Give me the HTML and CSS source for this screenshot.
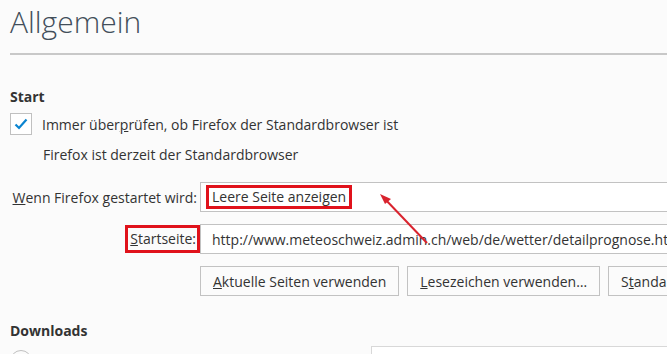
FILE: index.html
```html
<!DOCTYPE html>
<html lang="de">
<head>
  <meta charset="UTF-8">
  <title>Einstellungen - Allgemein</title>
  <link rel="stylesheet" href="styles.css">
</head>
<body>

  <div class="page">
    <h1 class="title">Allgemein</h1>

    <!-- Start -->
    <h2 class="group">Start</h2>
    <div class="check-row">
      <span class="checkbox">
        <svg width="14" height="12" viewBox="0 0 14 12"><path d="M1.5 6.5 L5 10 L12.5 1.5" fill="none" stroke="#0a84d0" stroke-width="2.2"/></svg>
      </span>
      <span>Immer über<u>p</u>rüfen, ob Firefox der Standardbrowser ist</span>
    </div>
    <p class="note">Firefox ist derzeit der Standardbrowser</p>

    <div class="form">
      <label class="label"><u>W</u>enn Firefox gestartet wird:</label>
      <div class="select"><span class="mark">Leere Seite anzeigen</span></div>

      <label class="label"><span class="mark mark-label"><u>S</u>tartseite:</span></label>
      <div class="input">http://www.meteoschweiz.admin.ch/web/de/wetter/detailprognose.html</div>

      <div></div>
      <div class="buttons">
        <button class="btn"><u>A</u>ktuelle Seiten verwenden</button>
        <button class="btn"><u>L</u>esezeichen verwenden…</button>
        <button class="btn">S<u>t</u>andard wiederherstellen</button>
      </div>
    </div>

    <!-- Downloads -->
    <h2 class="group group-downloads">Downloads</h2>
    <div class="download-row">
      <span class="radio"></span>
      <div class="folder-box">
        <svg width="14" height="12" viewBox="0 0 14 12"><path d="M1 2 H5 L6.5 3.5 H13 V11 H1 Z" fill="#f4d37a"/></svg>
      </div>
    </div>

    <svg class="arrow" width="60" height="60" viewBox="0 0 60 60">
      <line x1="51" y1="51" x2="8" y2="6" stroke="#d9232e" stroke-width="2"/>
      <path d="M4 2 L15 7 L9 12 Z" fill="#d9232e"/>
    </svg>
  </div>

</body>
</html>
```

FILE: styles.css
```css
body {
  margin: 0;
  background: #fbfbfb;
  color: #333;
  font-family: 'Open Sans', 'Noto Sans', sans-serif;
  font-size: 14px;
  overflow: hidden;
}

.page {
  position: relative;
  padding: 0 0 0 10px;
  width: 900px;
}

.title {
  margin: 0;
  padding: 2px 0 11px;
  font-size: 30px;
  font-weight: 300;
  color: #424e5a;
  line-height: 40px;
  border-bottom: 2px solid #c8c8c8;
}

.group {
  margin: 32px 0 0;
  font-size: 14px;
  font-weight: bold;
  color: #333;
  line-height: 20px;
}

.check-row {
  display: flex;
  align-items: center;
  gap: 10px;
  margin-top: 5px;
  height: 24px;
}

.checkbox {
  display: flex;
  align-items: center;
  justify-content: center;
  width: 20px;
  height: 20px;
  border: 1px solid #c0c0c0;
  background: #fff;
}

.note {
  margin: 7px 0 0 33px;
  line-height: 24px;
}

.form {
  display: grid;
  grid-template-columns: 187px 700px;
  column-gap: 3px;
  row-gap: 12px;
  margin-top: 15px;
  align-items: center;
}

.label {
  text-align: right;
}

.select, .input {
  height: 28px;
  border: 1px solid #c2c2c2;
  background: #fff;
  display: flex;
  align-items: center;
}

.select {
  padding-left: 5px;
}

.input {
  padding-left: 11px;
}

.mark {
  border: 3px solid #e0121b;
  padding: 0 3px;
  line-height: 18px;
}

.mark-label {
  display: inline-block;
  padding: 2px 1px 2px 2px;
  margin-right: -3px;
}

.buttons {
  display: flex;
  gap: 8px;
}

.btn {
  height: 30px;
  padding: 0 12px;
  border: 1px solid #c2c2c2;
  background: #fbfbfb;
  color: #333;
  font-family: inherit;
  font-size: 14px;
}

.group-downloads {
  margin-top: 25px;
}

.download-row {
  display: flex;
  margin-top: 5px;
}

.radio {
  width: 20px;
  height: 20px;
  border: 1px solid #c0c0c0;
  border-radius: 50%;
  margin-top: 4px;
}

.folder-box {
  margin-left: 339px;
  width: 400px;
  height: 30px;
  border: 1px solid #d8d8d8;
  background: #fff;
  padding: 4px 8px;
}

.arrow {
  position: absolute;
  left: 376px;
  top: 192px;
}
```
